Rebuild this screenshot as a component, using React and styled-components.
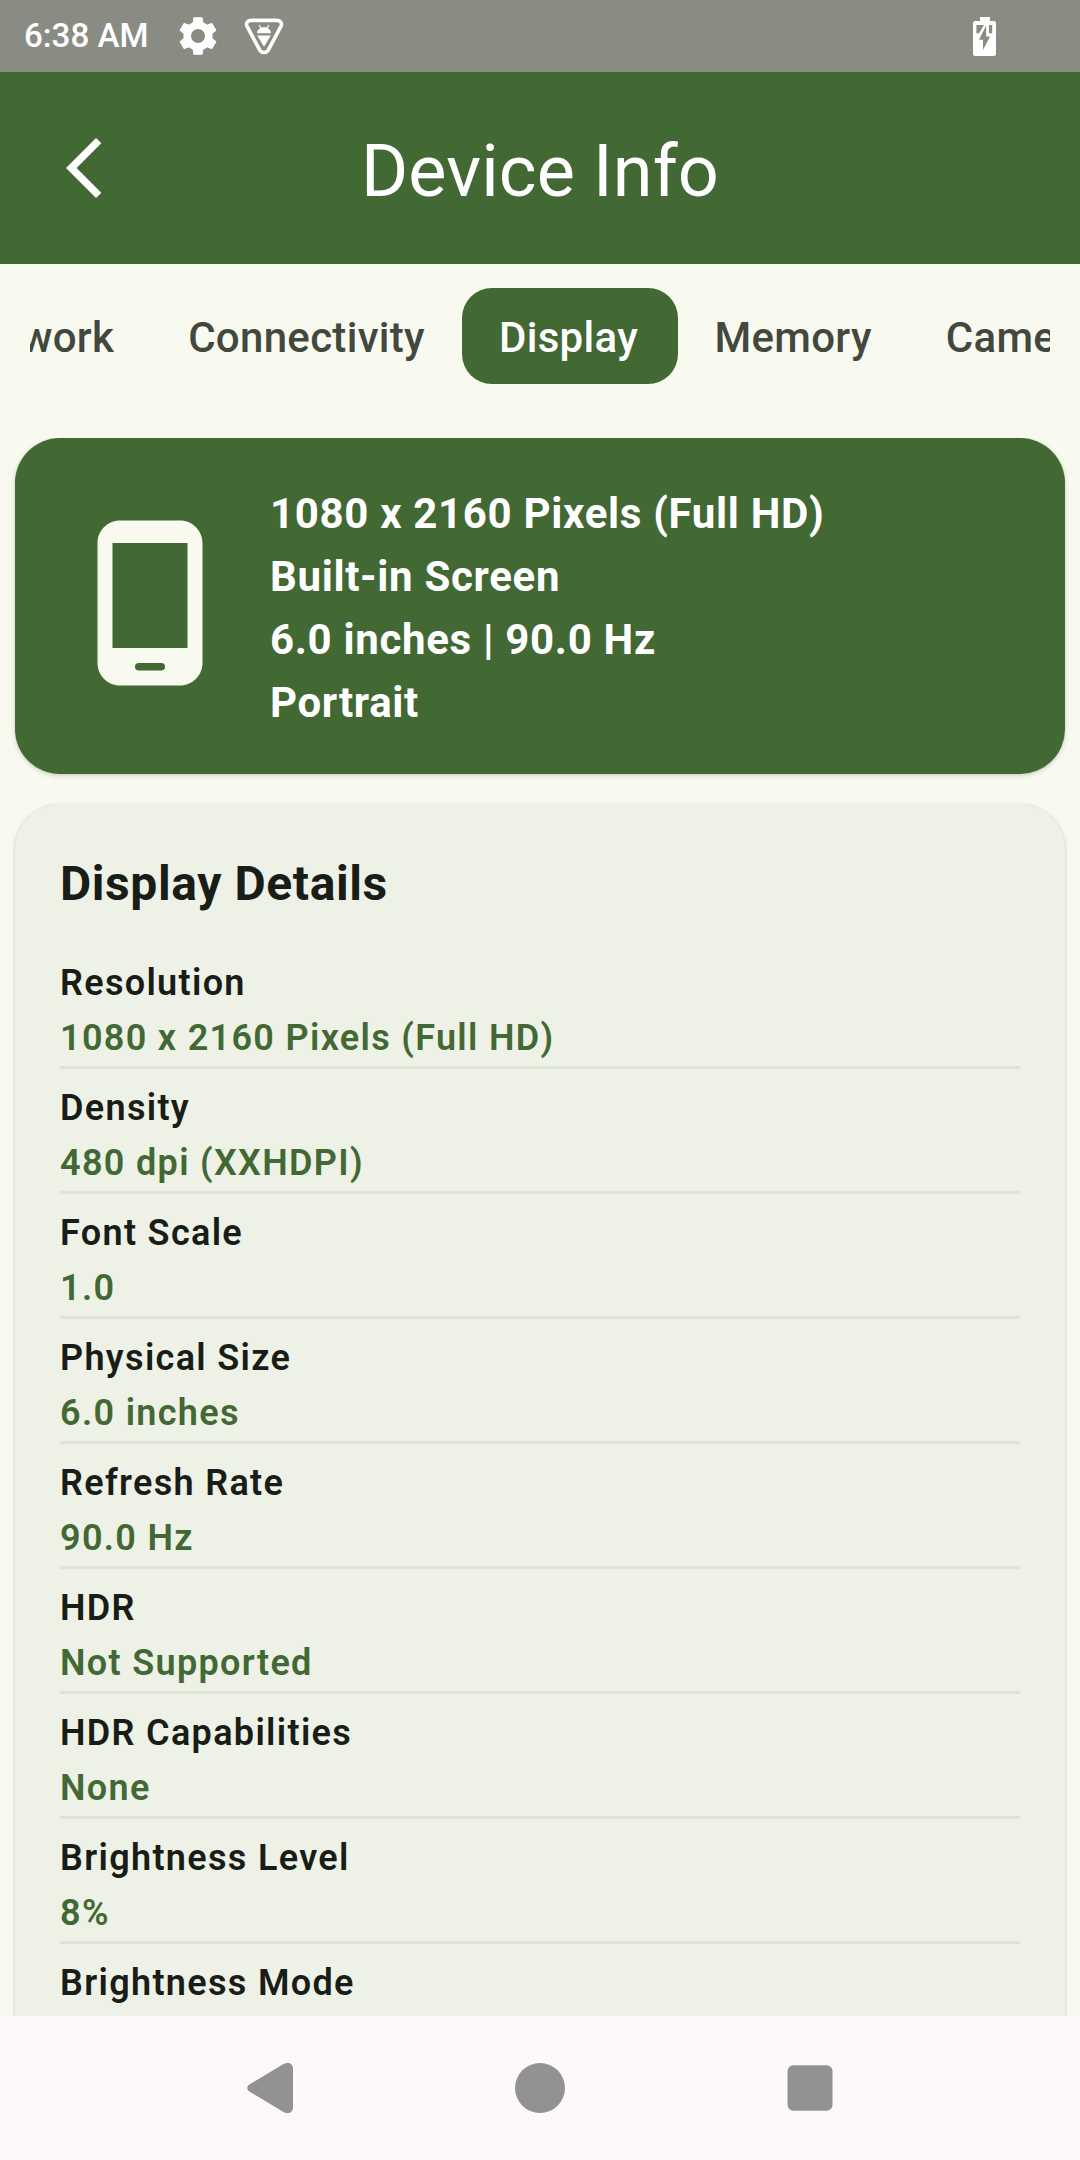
import React from "react";
import styled, { createGlobalStyle } from "styled-components";

const GlobalStyle = createGlobalStyle`
  * { box-sizing: border-box; }
  html, body { margin: 0; padding: 0; }
  body { font-family: Roboto, "Noto Sans", sans-serif; }
`;

const color = {
  primary: "#426834",
  onPrimary: "#ffffff",
  surface: "#f8faf0",
  card: "#eef1e6",
  text: "#191d17",
  muted: "#43483e",
  divider: "#e0e4d6",
  statusBar: "#898c82",
  navBar: "#fdf8fc",
  navIcon: "#929292",
};

const Screen = styled.div`
  width: 1080px;
  height: 2160px;
  display: flex;
  flex-direction: column;
  overflow: hidden;
  background: ${color.surface};
`;

const StatusBar = styled.div`
  flex: none;
  height: 72px;
  display: flex;
  align-items: center;
  justify-content: space-between;
  padding: 0 84px 0 24px;
  background: ${color.statusBar};
  color: #fff;
`;

const StatusGroup = styled.div`
  display: flex;
  align-items: center;
`;

const Clock = styled.span`
  width: 146px;
  font-size: 33.2px;
  line-height: 40px;
  font-weight: 500;
  white-space: nowrap;
`;

const StatusIcon = styled.svg`
  display: block;
  width: ${(p) => p.$w}px;
  height: ${(p) => p.$h}px;
  margin-left: ${(p) => p.$gap || 0}px;
`;

const AppBar = styled.header`
  flex: none;
  height: 192px;
  display: grid;
  grid-template-columns: 168px 1fr 168px;
  align-items: center;
  background: ${color.primary};
  color: ${color.onPrimary};
`;

const BackButton = styled.button`
  width: 72px;
  height: 72px;
  margin-left: 48px;
  padding: 0;
  border: 0;
  background: none;
  color: inherit;

  svg { display: block; width: 72px; height: 72px; }
`;

const Title = styled.h1`
  margin: 7px 0 0;
  font-size: 72px;
  line-height: 96px;
  font-weight: 400;
  letter-spacing: 0.15px;
  text-align: center;
  white-space: nowrap;
`;

const TabBar = styled.nav`
  flex: none;
  height: 96px;
  margin: 24px 30px 54px;
  overflow: hidden;
`;

const TabTrack = styled.div`
  display: flex;
  width: max-content;
  margin-left: -113px;
`;

const Tab = styled.button`
  height: 96px;
  padding: 2px ${(p) => (p.$active ? 39.5 : 37)}px 0 37px;
  border: 0;
  border-radius: 30px;
  background: ${(p) => (p.$active ? color.primary : "transparent")};
  color: ${(p) => (p.$active ? color.onPrimary : color.muted)};
  font-family: inherit;
  font-size: 42px;
  font-weight: 500;
  letter-spacing: 0.3px;
  white-space: nowrap;
`;

const Content = styled.main`
  flex: 1;
  min-height: 0;
  display: flex;
  flex-direction: column;
  gap: 30px;
  padding: 0 15px;
  overflow: hidden;
`;

const Card = styled.section`
  flex: none;
  border-radius: 45px;
  box-shadow: 0 2px 5px rgba(0, 0, 0, 0.15), 0 0 2px rgba(0, 0, 0, 0.1);
`;

const SummaryCard = styled(Card)`
  height: 336px;
  display: flex;
  align-items: center;
  gap: 30px;
  padding: 0 45px;
  background: ${color.primary};
  color: ${color.onPrimary};
`;

const PhoneGlyph = styled.svg`
  display: block;
  width: 180px;
  height: 180px;
  margin-top: -6px;
`;

const SummaryText = styled.div`
  padding-top: 4px;
  font-size: 42px;
  line-height: 63px;
  font-weight: 700;
  letter-spacing: 0.67px;
`;

const DetailsCard = styled(Card)`
  height: 1400px;
  padding: 45px;
  background: ${color.card};
  color: ${color.text};
`;

const CardTitle = styled.h2`
  margin: 0 0 27px;
  padding-top: 2px;
  font-size: 48px;
  line-height: 66px;
  font-weight: 700;
  letter-spacing: 0.6px;
`;

const Row = styled.div`
  height: 125px;
  display: flex;
  flex-direction: column;
  justify-content: flex-end;
  border-bottom: 3px solid ${color.divider};
`;

const RowText = styled.div`
  height: 55px;
  font-size: 36px;
  line-height: 55px;
  font-weight: 600;
  letter-spacing: 1.33px;
  color: ${(p) => (p.$value ? color.primary : "inherit")};
`;

const NavBar = styled.footer`
  flex: none;
  height: 144px;
  display: flex;
  align-items: center;
  justify-content: center;
  gap: 210px;
  background: ${color.navBar};
  color: ${color.navIcon};

  svg { display: block; width: 60px; height: 60px; }
`;

const tabs = ["Network", "Connectivity", "Display", "Memory", "Camera"];

const summary = [
  "1080 x 2160 Pixels (Full HD)",
  "Built-in Screen",
  "6.0 inches | 90.0 Hz",
  "Portrait",
];

const details = [
  ["Resolution", "1080 x 2160 Pixels (Full HD)"],
  ["Density", "480 dpi (XXHDPI)"],
  ["Font Scale", "1.0"],
  ["Physical Size", "6.0 inches"],
  ["Refresh Rate", "90.0 Hz"],
  ["HDR", "Not Supported"],
  ["HDR Capabilities", "None"],
  ["Brightness Level", "8%"],
  ["Brightness Mode", ""],
];

const GearIcon = () => (
  <StatusIcon $w={38} $h={38} $gap={9} viewBox="-19 -19 38 38" fill="none" stroke="currentColor">
    <circle r="10.8" strokeWidth="7.6" />
    {[0, 60, 120, 180, 240, 300].map((angle) => (
      <path key={angle} transform={`rotate(${angle})`} d="M-4 -18.2H4L4.8 -12.5H-4.8Z" fill="currentColor" strokeWidth="1.2" strokeLinejoin="round" />
    ))}
  </StatusIcon>
);

const DebugIcon = () => (
  <StatusIcon $w={40} $h={38} $gap={27} viewBox="0 0 40 38" fill="none">
    <path d="M7 3.4H33C36.6 3.4 38.5 6.2 36.9 9.4L24.4 32.8C22.4 36.3 17.6 36.3 15.6 32.8L3.1 9.4C1.5 6.2 3.4 3.4 7 3.4Z" stroke="currentColor" strokeWidth="3.6" />
    <path d="M13 16.2C13.2 12.6 16 10.2 20 10.2S26.8 12.6 27 16.2Z" fill="currentColor" />
    <path d="M17 11.4L15.2 8M23 11.4L24.8 8" stroke="currentColor" strokeWidth="1.2" />
    <path d="M13.2 18.6H26.8L20.8 28.6Q20 29.8 19.2 28.6Z" fill="currentColor" />
  </StatusIcon>
);

const BatteryIcon = () => (
  <StatusIcon $w={23} $h={39} viewBox="0 0 23 39" fill="currentColor">
    <path fillRule="evenodd" d="M7 0H17V4H21Q23 4 23 6V37Q23 39 21 39H2Q0 39 0 37V6Q0 4 2 4H7ZM3.4 8V16.2H6L11 8ZM13.2 8.4L6 22.8H10V33L17 19.6H13.2ZM16 8V16.2H19.2V8Z" />
  </StatusIcon>
);

export default function App() {
  return (
    <>
      <GlobalStyle />
      <Screen>
        <StatusBar>
          <StatusGroup>
            <Clock>6:38 AM</Clock>
            <GearIcon />
            <DebugIcon />
          </StatusGroup>
          <BatteryIcon />
        </StatusBar>

        <AppBar>
          <BackButton aria-label="Back">
            <svg viewBox="0 0 24 24" fill="currentColor">
              <path d="M17.77 3.77L16 2 6 12l10 10 1.77-1.77L9.54 12z" />
            </svg>
          </BackButton>
          <Title>Device Info</Title>
        </AppBar>

        <TabBar>
          <TabTrack>
            {tabs.map((name) => (
              <Tab key={name} $active={name === "Display"}>{name}</Tab>
            ))}
          </TabTrack>
        </TabBar>

        <Content>
          <SummaryCard>
            <PhoneGlyph viewBox="0 0 24 24" fill={color.surface}>
              <path fillRule="evenodd" d="M16 1H8C6.34 1 5 2.34 5 4v16c0 1.66 1.34 3 3 3h8c1.66 0 3-1.34 3-3V4c0-1.66-1.34-3-3-3zM7 4h10v14H7zM10.5 20h3a.5.5 0 0 1 0 1h-3a.5.5 0 0 1 0-1z" />
            </PhoneGlyph>
            <SummaryText>
              {summary.map((line) => <div key={line}>{line}</div>)}
            </SummaryText>
          </SummaryCard>

          <DetailsCard>
            <CardTitle>Display Details</CardTitle>
            {details.map(([label, value]) => (
              <Row key={label}>
                <RowText>{label}</RowText>
                <RowText $value>{value}</RowText>
              </Row>
            ))}
          </DetailsCard>
        </Content>

        <NavBar>
          <svg viewBox="0 0 60 60" fill="currentColor">
            <path d="M9.7 26.2L43.5 6.1C48 3.6 53 5 53 11V49C53 55 48 56.4 43.5 53.9L9.7 33.8C6.5 31.8 6.5 28.2 9.7 26.2Z" />
          </svg>
          <svg viewBox="0 0 60 60" fill="currentColor"><circle cx="30" cy="30" r="25" /></svg>
          <svg viewBox="0 0 60 60" fill="currentColor"><rect x="7.5" y="7.3" width="45" height="45.4" rx="6" /></svg>
        </NavBar>
      </Screen>
    </>
  );
}
